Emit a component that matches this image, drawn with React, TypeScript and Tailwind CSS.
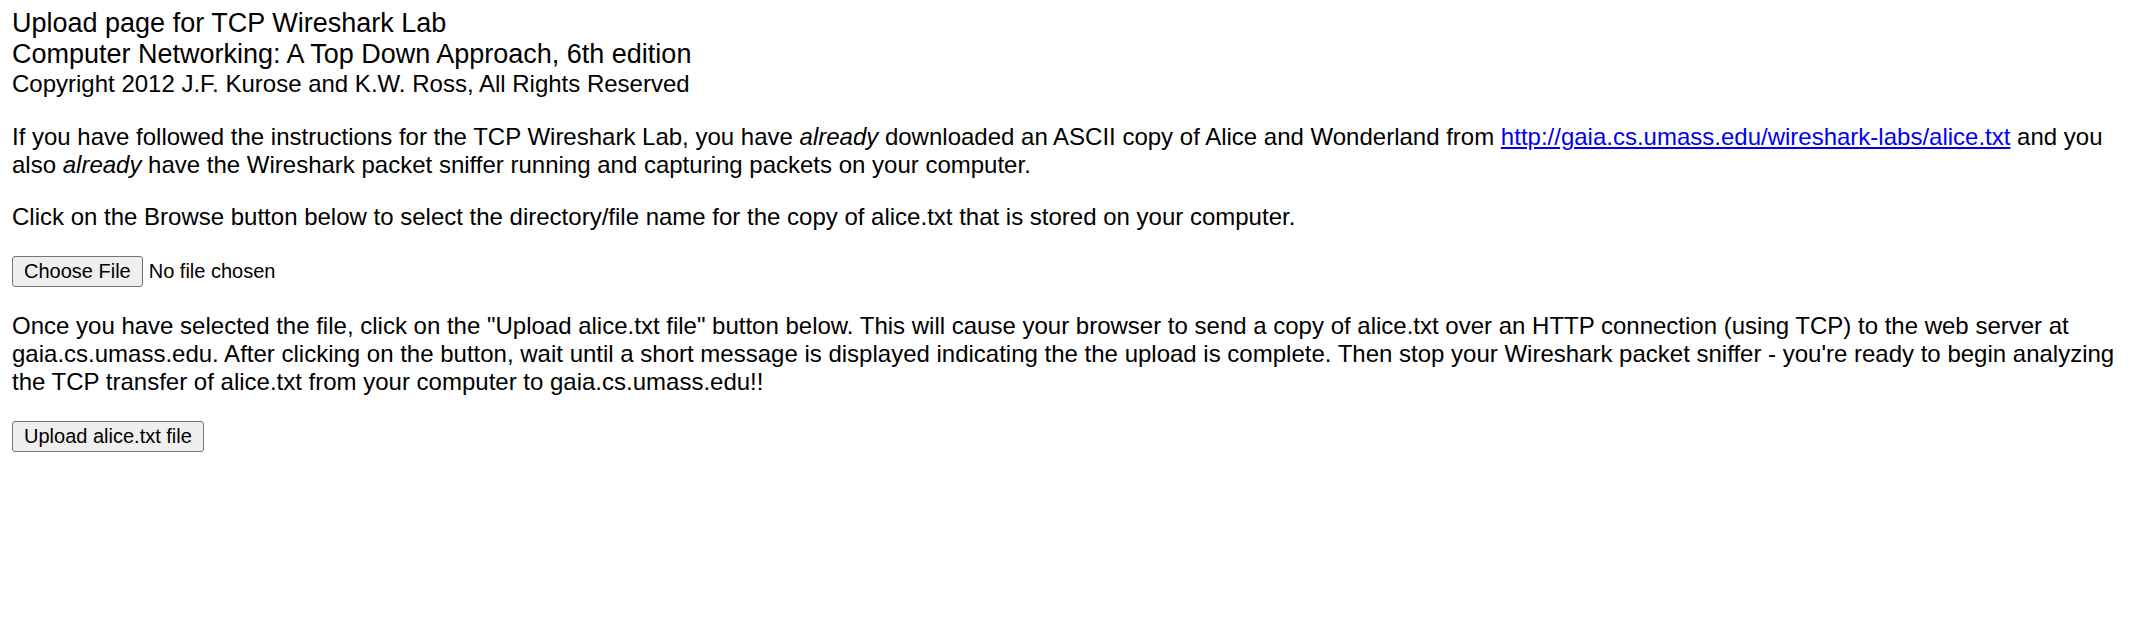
export default function App() {
  return (
    <div className="min-h-screen bg-white px-3 pt-2 text-[24px] leading-[normal] text-black font-['Liberation_Sans',Arial,sans-serif]">
      {/* Header */}
      <div>
        <span className="text-[27px]">
          Upload page for TCP Wireshark Lab
          <br />
          Computer Networking: A Top Down Approach, 6th edition
        </span>
        <br />
        Copyright 2012 J.F. Kurose and K.W. Ross, All Rights Reserved
      </div>

      <p className="mt-[25px] mb-6">
        If you have followed the instructions for the TCP Wireshark Lab, you have <em>already</em> downloaded an
        ASCII copy of Alice and Wonderland from{" "}
        <a href="#" className="text-[#0000ee] underline">
          http://gaia.cs.umass.edu/wireshark-labs/alice.txt
        </a>{" "}
        and you also <em>already</em> have the Wireshark packet sniffer running and capturing packets on your
        computer.
      </p>

      <p className="my-6">
        Click on the Browse button below to select the directory/file name for the copy of alice.txt that is stored
        on your computer.
      </p>

      {/* File picker */}
      <div className="mt-[25px] flex items-center gap-[6px] text-[20px]">
        <button className="inline-flex h-[31px] items-center rounded-[3px] border border-[#767676] bg-[#efefef] px-[11px] text-[20px] leading-[normal] text-black">
          Choose File
        </button>
        <span>No file chosen</span>
      </div>

      <p className="mt-[25px] mb-[25px]">
        Once you have selected the file, click on the "Upload alice.txt file" button below. This will cause your
        browser to send a copy of alice.txt over an HTTP connection (using TCP) to the web server at
        gaia.cs.umass.edu. After clicking on the button, wait until a short message is displayed indicating the the
        upload is complete. Then stop your Wireshark packet sniffer - you're ready to begin analyzing the TCP
        transfer of alice.txt from your computer to gaia.cs.umass.edu!!
      </p>

      <button className="inline-flex h-[31px] items-center rounded-[3px] border border-[#767676] bg-[#efefef] px-[11px] text-[20px] leading-[normal] text-black">
        Upload alice.txt file
      </button>
    </div>
  );
}
